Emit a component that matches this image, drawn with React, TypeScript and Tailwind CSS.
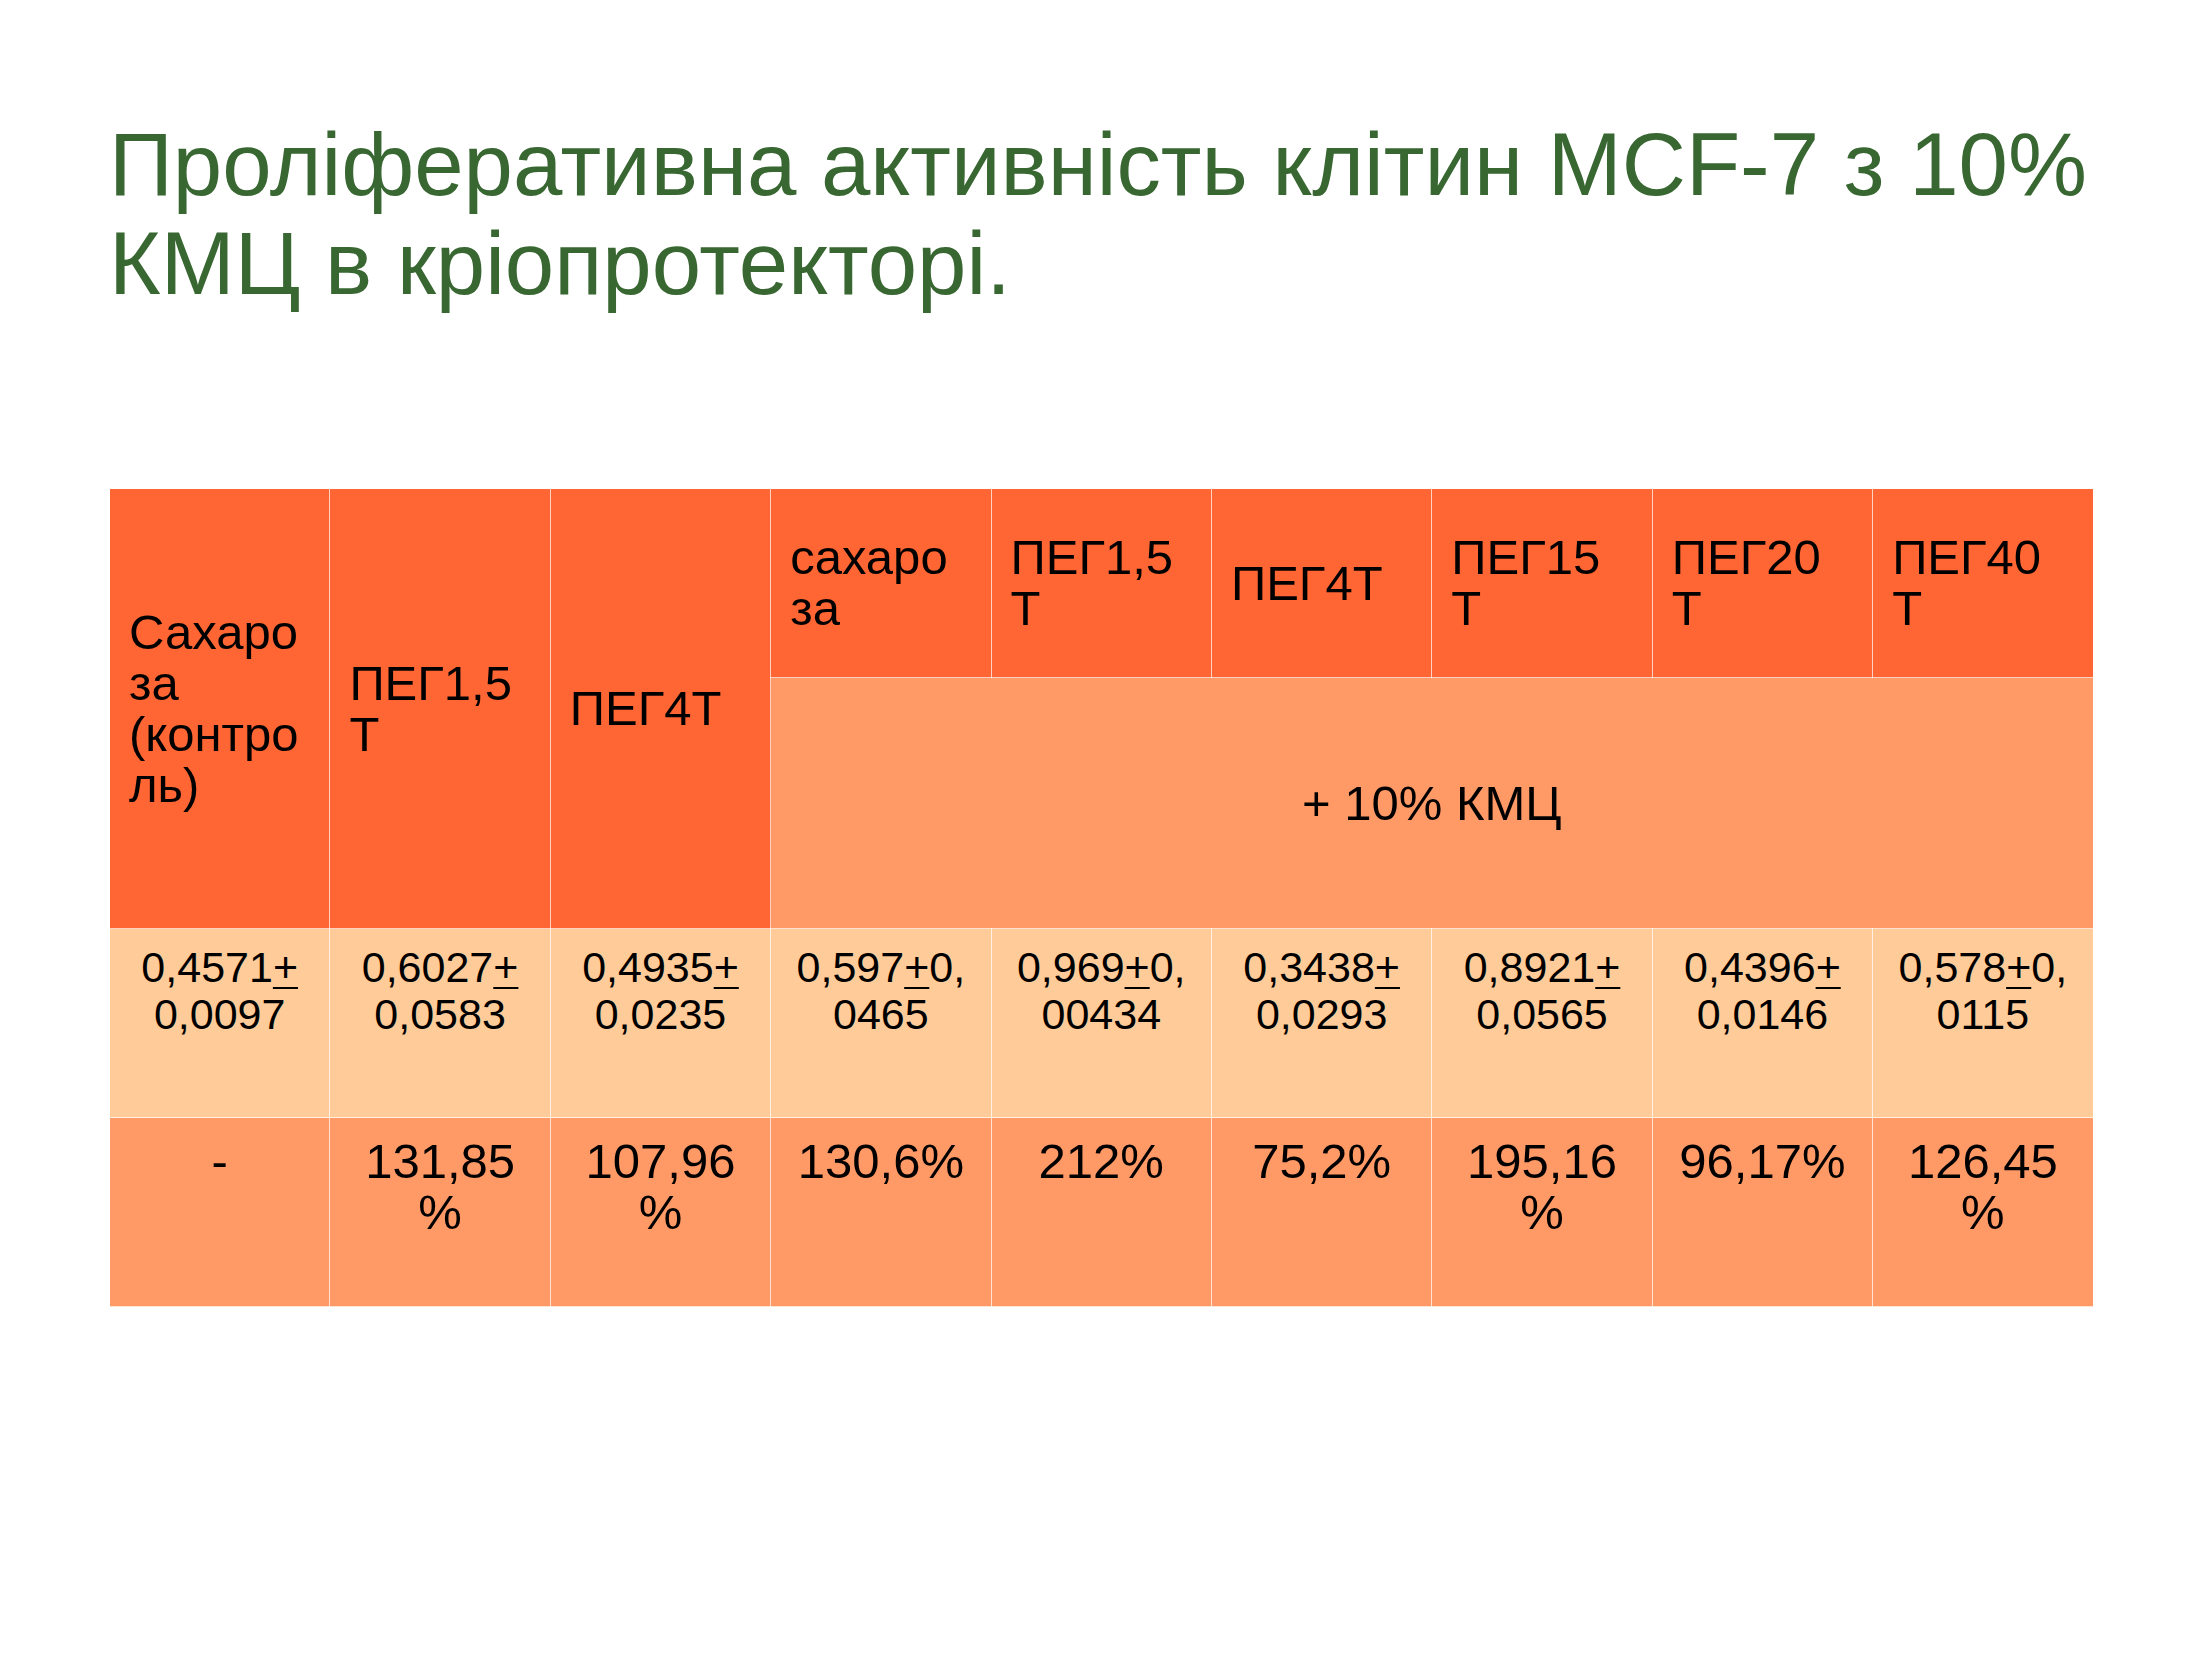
const font = { fontFamily: '"Liberation Sans", Arial, sans-serif' };

const values = [
  ["0,4571", "0,0097"],
  ["0,6027", "0,0583"],
  ["0,4935", "0,0235"],
  ["0,597", "0,0465"],
  ["0,969", "0,00434"],
  ["0,3438", "0,0293"],
  ["0,8921", "0,0565"],
  ["0,4396", "0,0146"],
  ["0,578", "0,0115"],
];

const percents = ["-", "131,85%", "107,96%", "130,6%", "212%", "75,2%", "195,16%", "96,17%", "126,45%"];

const topHeads = ["сахароза", "ПЕГ1,5Т", "ПЕГ4Т", "ПЕГ15Т", "ПЕГ20Т", "ПЕГ40Т"];

const cell = "border border-white/70 [overflow-wrap:anywhere]";
const head = `${cell} bg-[#ff6633] pl-[19px] pr-[25px] py-[11px] align-middle text-[49px] leading-[51px]`;

export default function App() {
  return (
    <div className="h-[1653px] w-[2206px] bg-white text-black" style={font}>
      <h1 className="pl-[109px] pt-[115px] text-[88.8px] font-normal leading-[99px] text-[#386732]">
        Проліферативна активність клітин MCF-7 з 10%
        <br />
        КМЦ в кріопротекторі.
      </h1>

      <table className="ml-[109px] mt-[175px] w-[1984px] table-fixed border-collapse">
        <colgroup>
          {values.map((_, i) => (
            <col key={i} className="w-[220.4px]" />
          ))}
        </colgroup>
        <tbody>
          <tr>
            <td rowSpan={2} className={head}>
              Сахароза (контроль)
            </td>
            <td rowSpan={2} className={head}>
              ПЕГ1,5Т
            </td>
            <td rowSpan={2} className={head}>
              ПЕГ4Т
            </td>
            {topHeads.map((h) => (
              <td key={h} className={`${head} h-[189px]`}>
                {h}
              </td>
            ))}
          </tr>
          <tr>
            <td
              colSpan={6}
              className={`${cell} h-[251px] bg-[#ff9966] px-[22px] py-[11px] text-center align-middle text-[49px] leading-[51px]`}
            >
              + 10% КМЦ
            </td>
          </tr>
          <tr>
            {values.map(([a, b], i) => (
              <td
                key={i}
                className={`${cell} h-[189px] bg-[#ffcc99] px-[22px] pt-[15px] text-center align-top text-[43px] leading-[47px]`}
              >
                {a}
                <span className="underline decoration-[1.5px] underline-offset-[5px]">+</span>
                {b}
              </td>
            ))}
          </tr>
          <tr>
            {percents.map((p, i) => (
              <td
                key={i}
                className={`${cell} h-[189px] bg-[#ff9966] px-[22px] pt-[18px] text-center align-top text-[49px] leading-[51px]`}
              >
                {p}
              </td>
            ))}
          </tr>
        </tbody>
      </table>
    </div>
  );
}
